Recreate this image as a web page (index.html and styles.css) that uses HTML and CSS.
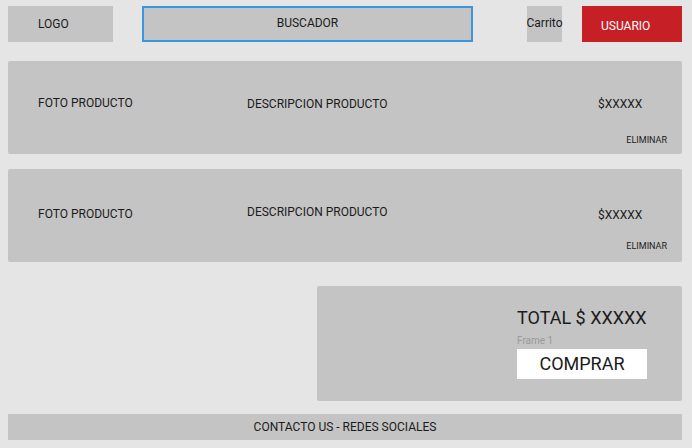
FILE: index.html
```html
<!DOCTYPE html>
<html lang="es">
<head>
<meta charset="utf-8">
<title>Carrito</title>
<link rel="stylesheet" href="styles.css">
</head>
<body>
<div class="page">
  <header class="header">
    <div class="logo"><span class="logo-text">LOGO</span></div>
    <div class="search"><span class="search-text">BUSCADOR</span></div>
    <div class="cart"><span class="cart-text">Carrito</span></div>
    <div class="user"><span class="user-text">USUARIO</span></div>
  </header>

  <section class="card card-a">
    <div class="photo">FOTO PRODUCTO</div>
    <div class="desc">DESCRIPCION PRODUCTO</div>
    <div class="side">
      <div class="price">$XXXXX</div>
      <div class="remove">ELIMINAR</div>
    </div>
  </section>

  <section class="card card-b">
    <div class="photo">FOTO PRODUCTO</div>
    <div class="desc">DESCRIPCION PRODUCTO</div>
    <div class="side">
      <div class="price">$XXXXX</div>
      <div class="remove">ELIMINAR</div>
    </div>
  </section>

  <div class="summary-row">
    <section class="summary">
      <div class="summary-col">
        <div class="total">TOTAL $ XXXXX</div>
        <div class="frame-label">Frame 1</div>
        <div class="buy">COMPRAR</div>
      </div>
    </section>
  </div>

  <footer class="footer">CONTACTO US - REDES SOCIALES</footer>
</div>
</body>
</html>
```

FILE: styles.css
```css
* { box-sizing: border-box; }

html, body {
  margin: 0;
  padding: 0;
  background: #e5e5e5;
}

body {
  font-family: Roboto, "Liberation Sans", sans-serif;
  color: #1b1b1b;
  font-size: 12px;
  line-height: 14px;
}

.page {
  width: 692px;
  height: 448px;
  padding: 6px 10px 0 8px;
  display: flex;
  flex-direction: column;
}

/* header */
.header {
  display: flex;
  align-items: flex-start;
  height: 36px;
}

.logo {
  width: 105px;
  height: 36px;
  background: #c4c4c4;
  padding: 11px 0 0 30px;
}

.search {
  width: 331px;
  height: 36px;
  margin-left: 29px;
  background: #c4c4c4;
  border: 2px solid #3a97df;
  padding-top: 8px;
  text-align: center;
}

.cart {
  width: 35px;
  height: 36px;
  margin-left: 54px;
  background: #c4c4c4;
  padding-top: 10px;
  display: flex;
  justify-content: center;
  white-space: nowrap;
}

.user {
  width: 100px;
  height: 36px;
  margin-left: 20px;
  background: #c62026;
  color: #ffffff;
  padding: 13px 0 0 19px;
}

/* product cards */
.card {
  display: flex;
  height: 93px;
  background: #c4c4c4;
  border-radius: 2px;
  padding: 0 15px 0 30px;
}

.card-a { margin-top: 19px; }
.card-b { margin-top: 15px; }

.photo {
  width: 209px;
}

.desc {
  flex: 1;
  margin-top: 36px;
}

.side {
  width: 69px;
  display: flex;
  flex-direction: column;
}

.remove {
  align-self: flex-end;
  font-size: 9px;
  line-height: 11px;
}

.card-a .photo { margin-top: 35px; }
.card-a .price { margin-top: 36px; }
.card-a .remove { margin-top: 24px; }

.card-b .photo { margin-top: 38px; }
.card-b .desc { margin-top: 36px; }
.card-b .price { margin-top: 39px; }
.card-b .remove { margin-top: 19px; }

/* summary */
.summary-row {
  display: flex;
  justify-content: flex-end;
  margin-top: 24px;
}

.summary {
  width: 365px;
  height: 115px;
  background: #c4c4c4;
  border-radius: 2px;
  display: flex;
  justify-content: flex-end;
  padding: 21px 35px 0 0;
}

.summary-col {
  width: 130px;
  display: flex;
  flex-direction: column;
}

.total {
  font-size: 18px;
  line-height: 21px;
  white-space: nowrap;
}

.frame-label {
  margin-top: 7px;
  font-size: 10px;
  line-height: 12px;
  color: #9a9a9a;
}

.buy {
  margin-top: 2px;
  height: 30px;
  background: #ffffff;
  font-size: 18px;
  line-height: 30px;
  text-align: center;
}

/* footer */
.footer {
  margin-top: 13px;
  height: 26px;
  background: #c4c4c4;
  text-align: center;
  line-height: 26px;
}
```
